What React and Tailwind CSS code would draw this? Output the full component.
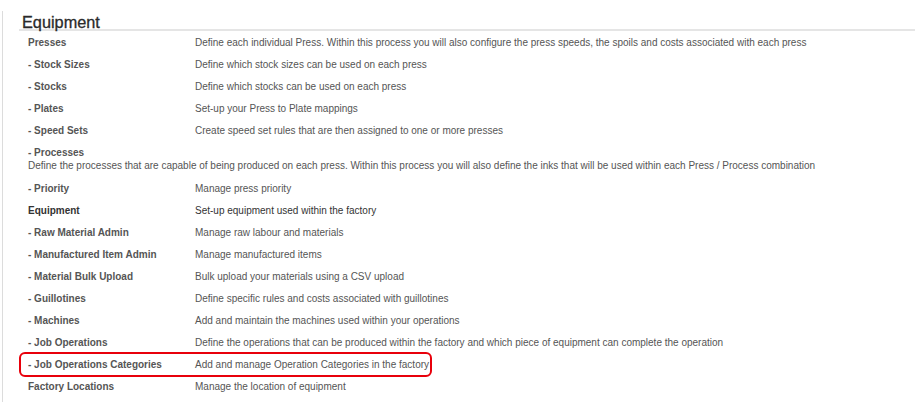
import React from 'react';

const rows = [
  { label: 'Presses', desc: 'Define each individual Press. Within this process you will also configure the press speeds, the spoils and costs associated with each press' },
  { label: '- Stock Sizes', desc: 'Define which stock sizes can be used on each press' },
  { label: '- Stocks', desc: 'Define which stocks can be used on each press' },
  { label: '- Plates', desc: 'Set-up your Press to Plate mappings' },
  { label: '- Speed Sets', desc: 'Create speed set rules that are then assigned to one or more presses' },
  { label: '- Processes', desc: 'Define the processes that are capable of being produced on each press. Within this process you will also define the inks that will be used within each Press / Process combination', stacked: true },
  { label: '- Priority', desc: 'Manage press priority' },
  { label: 'Equipment', desc: 'Set-up equipment used within the factory', dark: true },
  { label: '- Raw Material Admin', desc: 'Manage raw labour and materials' },
  { label: '- Manufactured Item Admin', desc: 'Manage manufactured items' },
  { label: '- Material Bulk Upload', desc: 'Bulk upload your materials using a CSV upload' },
  { label: '- Guillotines', desc: 'Define specific rules and costs associated with guillotines' },
  { label: '- Machines', desc: 'Add and maintain the machines used within your operations' },
  { label: '- Job Operations', desc: 'Define the operations that can be produced within the factory and which piece of equipment can complete the operation' },
  { label: '- Job Operations Categories', desc: 'Add and manage Operation Categories in the factory', highlight: true },
  { label: 'Factory Locations', desc: 'Manage the location of equipment' },
];

const Row = ({ row }) => {
  const color = row.dark ? 'text-[#333]' : 'text-[#555]';

  if (row.stacked) {
    return (
      <div className={`py-[5px] text-[10px] leading-[13px] ${color}`}>
        <div className="font-bold">{row.label}</div>
        <div>{row.desc}</div>
      </div>
    );
  }

  return (
    <div className={`relative flex items-center h-[22px] text-[10px] ${color}`}>
      <div className="w-[167px] shrink-0 font-bold">{row.label}</div>
      <div className="whitespace-nowrap">{row.desc}</div>
      {row.highlight && (
        <div className="absolute left-[-9px] top-[-1px] w-[413px] h-[25px] border-2 border-[#e8000b] rounded-[6px] pointer-events-none" />
      )}
    </div>
  );
};

export default function App() {
  return (
    <div className="h-[402px] w-[915px] overflow-hidden bg-white pt-[11px] pl-[2px] font-['Liberation_Sans',Arial,sans-serif]">
      <div className="h-full border-l border-[#dcdcdc] pl-[16px]">
        <h2 className="pl-[3px] pt-[4px] text-[16.3px] leading-[14px] text-[#2a2a2a] border-b-2 border-[#e5e5e5] [-webkit-text-stroke:0.3px_#2a2a2a]">
          Equipment
        </h2>
        <div className="pl-[9px]">
          {rows.map((row) => (
            <Row key={row.label} row={row} />
          ))}
        </div>
      </div>
    </div>
  );
}
